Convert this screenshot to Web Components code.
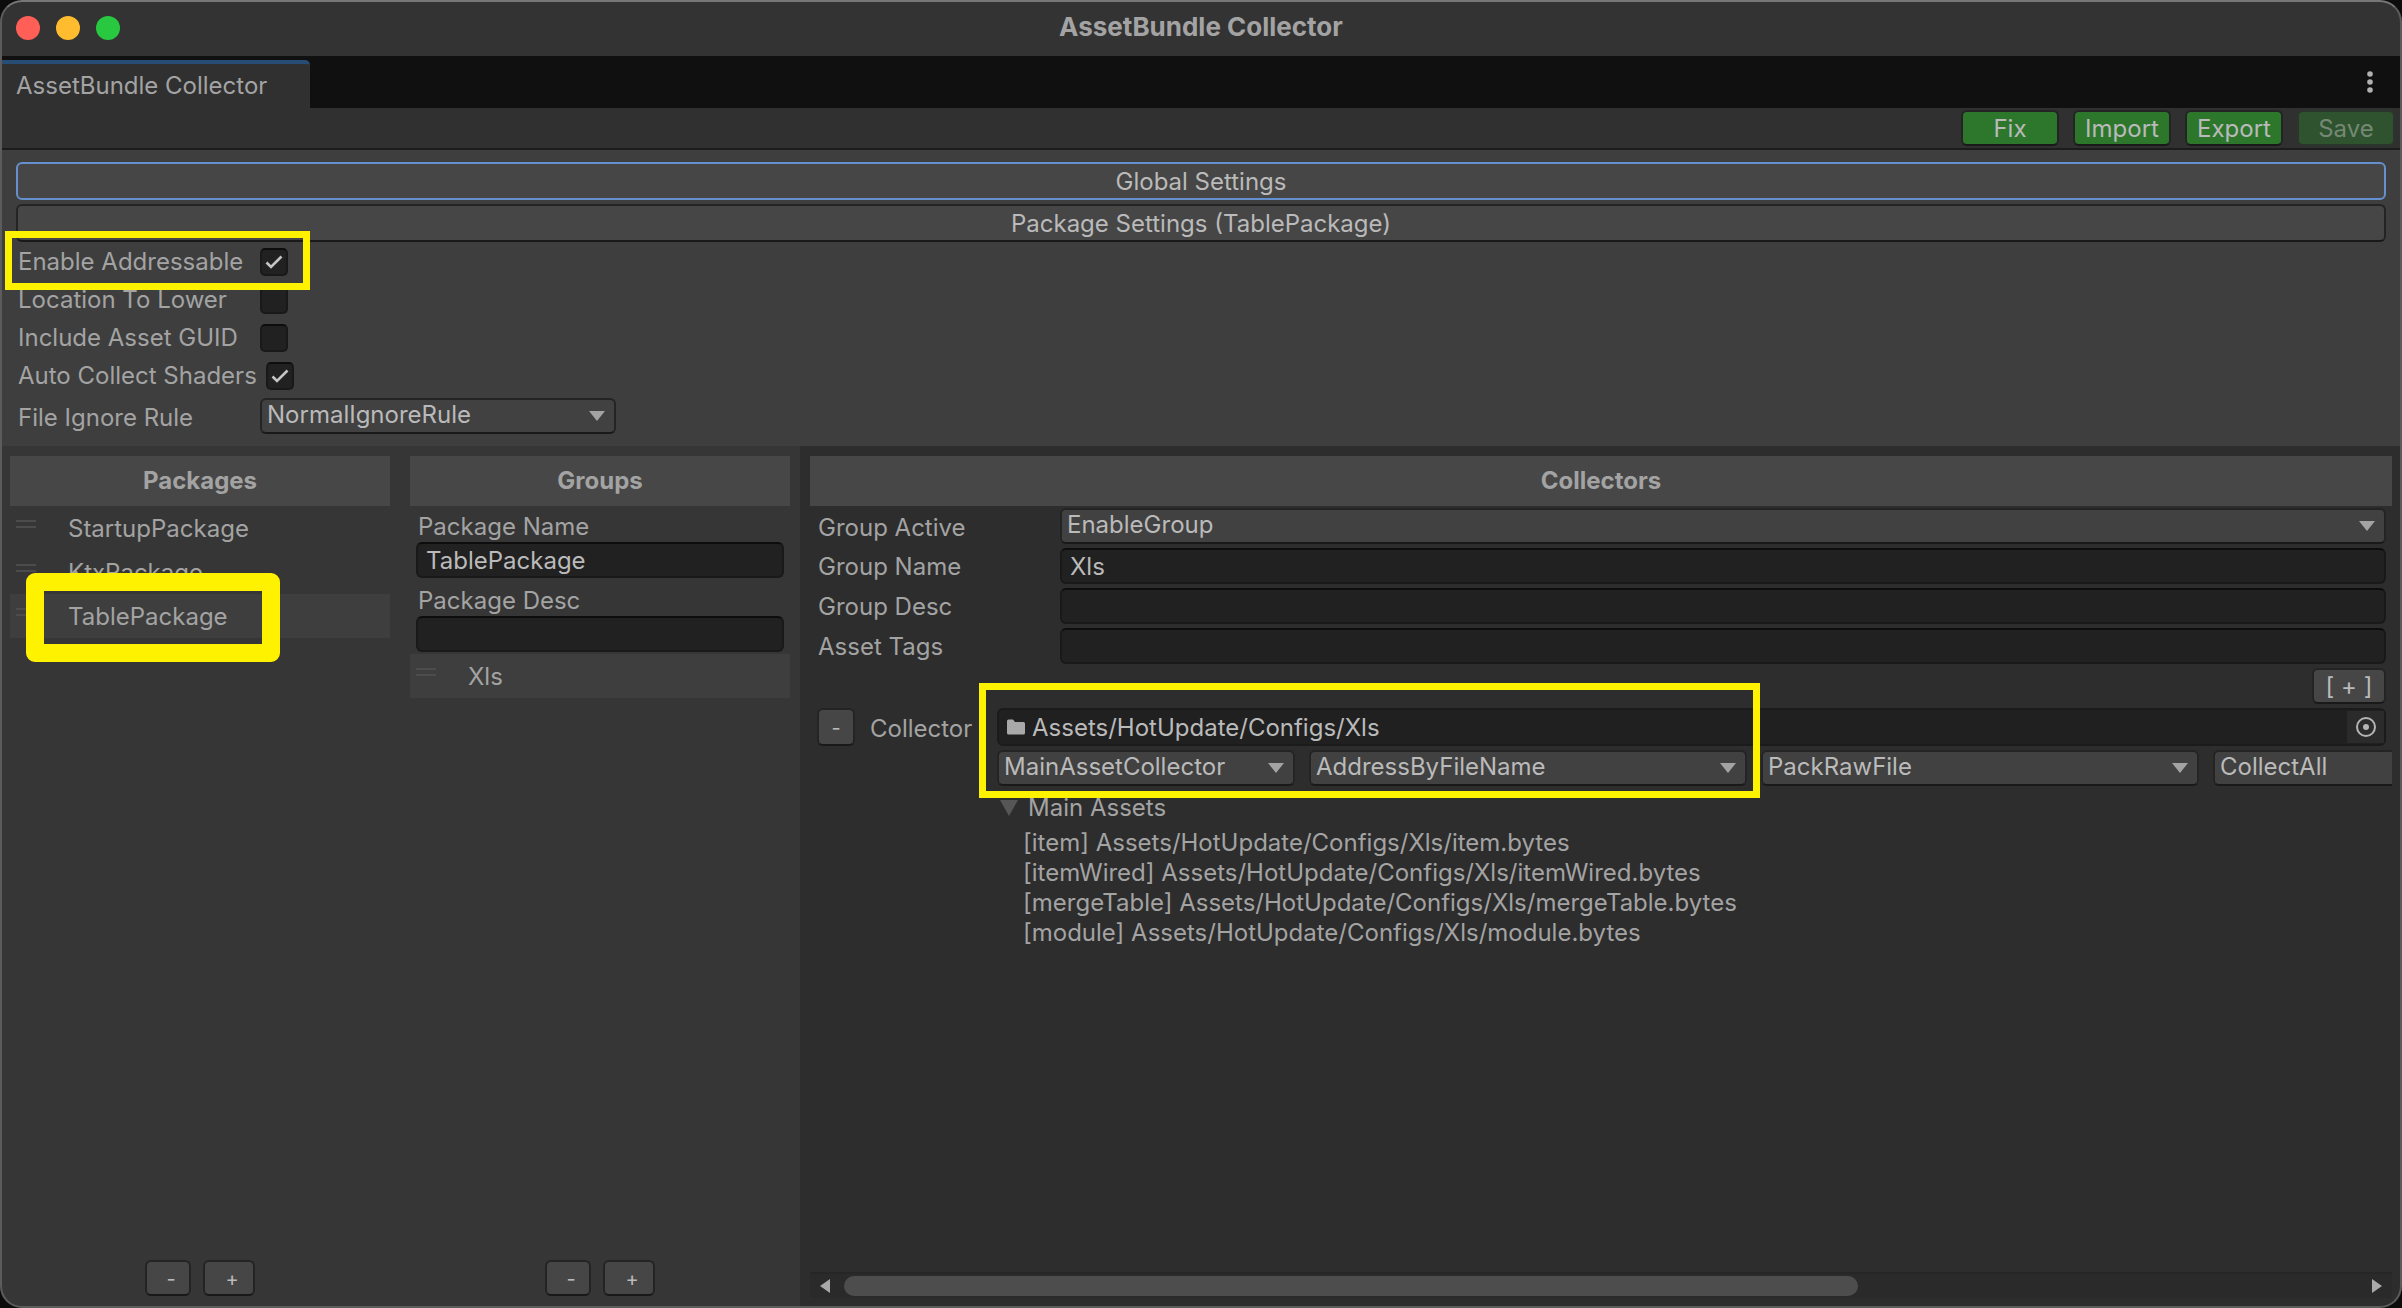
<!DOCTYPE html>
<html lang="en">
<head>
<meta charset="utf-8">
<title>AssetBundle Collector</title>
<style>
  html, body { margin: 0; height: 100%; background: #0c0c0c; }
  body {
    font: 24px/30px Inter, "Liberation Sans", sans-serif;
    color: #a3a3a3;
    --edge: #242424;
    --edge-dark: #191919;
    --face: #464646;
    --ink: #bababa;
  }
</style>
</head>
<body>
<bundle-window></bundle-window>

<script>
const define = (name, html, setup) => {
  const tpl = document.createElement('template');
  tpl.innerHTML = html;
  customElements.define(name, class extends HTMLElement {
    constructor() {
      super();
      this.attachShadow({ mode: 'open' }).append(tpl.content.cloneNode(true));
    }
    connectedCallback() { if (setup) setup(this, this.shadowRoot); }
  });
};

/* Push button: `tone` picks the colour, `focused` the blue ring */
define('tool-button', `
<style>
  :host { display: block; }
  button {
    box-sizing: border-box; display: block; width: 100%; height: 100%; min-height: 36px;
    margin: 0; padding: 2px 0 0; font: inherit; line-height: 30px; color: var(--ink);
    background: var(--face); border: 2px solid var(--edge); border-bottom-color: var(--edge-dark);
    border-radius: 6px;
  }
  :host([tone="green"]) button { background: #2d772d; }
  :host([tone="green"]) button:disabled { background: #2e532e; border-color: #2b352b; color: #758875; }
  :host([focused]) button { border-color: #6690cd; }
  :host([small]) button { font-size: 20px; }
  :host([shift]) button { padding-left: 6px; }
</style>
<button type="button"><slot></slot></button>`, (el, root) => {
  const b = root.querySelector('button');
  b.disabled = el.hasAttribute('disabled');
  if (el.title) b.setAttribute('aria-label', el.title);
});

/* Labelled tick box */
define('check-field', `
<style>
  :host { display: block; height: 38px; }
  label { display: flex; align-items: center; height: 31px; }
  span { min-width: 242px; }
  :host([tight]) span { min-width: 0; margin-right: 9px; }
  input {
    appearance: none; box-sizing: border-box; width: 28px; height: 28px; margin: 0; display: block;
    background: #212121; border: 2px solid var(--edge-dark); border-top-color: #0d0d0d; border-radius: 5px;
  }
  .box { position: relative; }
  svg { position: absolute; inset: 0; display: none; pointer-events: none; }
  input:checked + svg { display: block; }
</style>
<label><span><slot></slot></span><div class="box"><input type="checkbox"><svg width="28" height="28" viewBox="0 0 28 28"><path d="M6.500 14.500l4.500 4.500L21.500 8.500" fill="none" stroke="#c4c4c4" stroke-width="2.600"/></svg></div></label>`,
(el, root) => { root.querySelector('input').checked = el.hasAttribute('checked'); });

/* Drop-down, optionally with a label in front */
define('menu-field', `
<style>
  :host { display: block; }
  label { display: flex; align-items: center; }
  .text { flex: none; width: var(--label, 0px); overflow: hidden; padding-top: 4px; }
  .text, .box { display: block; }
  .box { position: relative; flex: 1; min-width: 0; }
  select {
    appearance: none; box-sizing: border-box; display: block; width: 100%; height: 36px; margin: 0;
    padding: 0 40px 2px 5px; font: inherit; line-height: 30px; color: var(--ink); background: #414141;
    border: 2px solid var(--edge); border-bottom-color: var(--edge-dark); border-radius: 6px;
  }
  svg { position: absolute; right: 11px; top: 13px; pointer-events: none; }
</style>
<label><span class="text"></span><span class="box"><select></select><svg width="16" height="10" viewBox="0 0 16 10"><path d="M0 0h16L8 10z" fill="#a3a3a3"/></svg></span></label>`,
(el, root) => {
  root.querySelector('.text').textContent = el.getAttribute('label') || '';
  const s = root.querySelector('select');
  s.replaceChildren(new Option(el.getAttribute('value')));
  if (!el.hasAttribute('label')) s.setAttribute('aria-label', el.getAttribute('name'));
});

/* Text box; `stacked` puts the label above it */
define('text-field', `
<style>
  :host { display: block; }
  label { display: flex; align-items: center; }
  span { flex: none; width: var(--label); padding-top: 2px; }
  input {
    box-sizing: border-box; flex: 1; min-width: 0; height: 36px; margin: 0; padding: 0 8px;
    font: inherit; color: var(--ink); background: #212121;
    border: 2px solid var(--edge-dark); border-top-color: #0d0d0d; border-radius: 6px;
  }
  :host([stacked]) label { flex-direction: column; align-items: stretch; }
  :host([stacked]) span { width: auto; height: 36px; padding: 0 0 0 2px; line-height: 42px; }
  :host([stacked]) input { flex: none; }
</style>
<label><span></span><input type="text"></label>`, (el, root) => {
  root.querySelector('span').textContent = el.getAttribute('label');
  root.querySelector('input').value = el.getAttribute('value') || '';
});

/* Reorderable list row */
define('list-row', `
<style>
  :host { display: flex; align-items: center; height: 44px; padding-left: 6px; box-sizing: border-box; line-height: 32px; }
  :host([selected]) { background: #3e3e3e; }
  i { width: 20px; height: 4px; margin: 0 32px 8px 0; border: solid #4c4c4c; border-width: 2px 0; }
  span { padding-top: 2px; }
</style>
<i></i><span><slot></slot></span>`);

/* Column with a header bar */
define('pane-column', `
<style>
  :host { display: flex; flex-direction: column; min-width: 0; padding: 10px; box-sizing: border-box; background: #363636; }
  :host([dark]) { background: #2d2d2d; }
  h2 { flex: none; margin: 0; font: inherit; font-weight: 700; line-height: 50px; text-align: center; background: #474747; }
  .body { flex: 1; min-height: 0; overflow: hidden; }
  footer { display: flex; }
</style>
<h2></h2><div class="body"><slot></slot></div><footer><slot name="foot"></slot></footer>`,
(el, root) => { root.querySelector('h2').textContent = el.getAttribute('heading'); });

/* Remove / add pair */
define('list-tools', `
<style>
  :host { display: flex; justify-content: center; gap: 12px; width: 100%; padding-bottom: 2px; }
  .remove { width: 46px; }
  .add { width: 52px; }
</style>
<tool-button class="remove" small shift title="Remove">-</tool-button><tool-button class="add" small shift title="Add">+</tool-button>`);

/* One collector: path field, rule menus and the assets found */
define('collector-item', `
<style>
  :host { display: grid; grid-template-columns: 38px 142px 1fr; padding-left: 7px; row-gap: 4px; }
  .minus { height: 38px; }
  .name { height: 38px; padding-left: 15px; line-height: 42px; }
  .path {
    display: flex; align-items: center; box-sizing: border-box; height: 38px; margin-right: 6px; padding-left: 8px;
    background: #202020; border: 2px solid #1b1b1b; border-radius: 6px;
  }
  .path input { flex: 1; min-width: 0; margin: 0; padding: 2px 0 0 7px; border: 0; background: none; font: inherit; color: var(--ink); }
  .path button { width: 37px; height: 32px; padding: 0; border: 0; background: #2b2b2b; display: grid; place-items: center; }
  .menus, .assets { grid-column: 3; }
  .menus { display: flex; gap: 14px; overflow: hidden; }
  .menus > * { flex: none; width: 438px; }
  .menus > :first-child { width: 298px; }
  summary { display: flex; align-items: center; gap: 10px; height: 36px; padding-left: 3px; list-style: none; }
  ul { list-style: none; margin: 0; padding: 2px 0 0 26px; }
</style>
<tool-button class="minus" small title="Remove collector">-</tool-button>
<label class="name" for="path">Collector</label>
<div class="path">
  <svg width="18" height="16" viewBox="0 0 18 16"><path d="M0 2a1.500 1.500 0 0 1 1.500-1.500H6L8 3h8.500A1.500 1.500 0 0 1 18 4.500V14a1.500 1.500 0 0 1-1.500 1.500h-15A1.500 1.500 0 0 1 0 14z" fill="#a9a9a9"/></svg>
  <input id="path" type="text" value="Assets/HotUpdate/Configs/Xls">
  <button type="button" aria-label="Pick folder"><svg width="22" height="22" viewBox="0 0 22 22"><circle cx="11" cy="11" r="9" fill="none" stroke="#b4b4b4" stroke-width="2"/><circle cx="11" cy="11" r="3" fill="#b4b4b4"/></svg></button>
</div>
<div class="menus">
  <menu-field name="Collector type" value="MainAssetCollector"></menu-field>
  <menu-field name="Address rule" value="AddressByFileName"></menu-field>
  <menu-field name="Pack rule" value="PackRawFile"></menu-field>
  <menu-field name="Filter rule" value="CollectAll"></menu-field>
</div>
<details class="assets" open>
  <summary><svg width="18" height="16" viewBox="0 0 18 16"><path d="M0 0h18L9 16z" fill="#565656"/></svg>Main Assets</summary>
  <ul>
    <li>[item] Assets/HotUpdate/Configs/Xls/item.bytes</li>
    <li>[itemWired] Assets/HotUpdate/Configs/Xls/itemWired.bytes</li>
    <li>[mergeTable] Assets/HotUpdate/Configs/Xls/mergeTable.bytes</li>
    <li>[module] Assets/HotUpdate/Configs/Xls/module.bytes</li>
  </ul>
</details>`);

/* Horizontal scroller */
define('scroll-strip', `
<style>
  :host { display: flex; align-items: center; box-sizing: border-box; width: 100%; height: 26px; padding: 0 10px; gap: 14px; background: #2a2a2a; border-top: 2px solid #262626; }
  .track { flex: 1; }
  .thumb { width: 67%; height: 20px; border-radius: 10px; background: #4d4d4d; }
</style>
<svg width="10" height="14" viewBox="0 0 10 14"><path d="M10 0v14L0 7z" fill="#a9a9a9"/></svg>
<div class="track"><div class="thumb"></div></div>
<svg width="10" height="14" viewBox="0 0 10 14"><path d="M0 0v14l10-7z" fill="#a9a9a9"/></svg>`);

/* Yellow call-out frame laid over the window */
define('callout-frame', `
<style>
  :host { position: absolute; box-sizing: border-box; border: 7px solid #fff200; pointer-events: none; }
  :host([bold]) { border-width: 18px; border-radius: 9px; }
</style>`);

define('bundle-window', `
<style>
  :host { display: flex; flex-direction: column; position: relative; box-sizing: border-box; min-height: 100vh; background: #3e3e3e; border-radius: 22px; overflow: hidden; }
  .rim { position: absolute; inset: 0; box-sizing: border-box; border: 2px solid #5c5c5c; border-top-color: #777; border-radius: 22px; pointer-events: none; }
  header { display: grid; grid-template-columns: 1fr auto 1fr; align-items: center; height: 56px; background: #333; }
  .lights { display: flex; gap: 16px; padding-left: 16px; }
  .lights i { width: 24px; height: 24px; border-radius: 50%; background: #ff5f57; }
  .lights i:nth-child(2) { background: #febc2e; }
  .lights i:nth-child(3) { background: #28c840; }
  h1 { margin: 0; font: inherit; font-size: 26px; font-weight: 700; height: 32px; }
  nav { display: flex; justify-content: space-between; align-items: flex-end; height: 52px; background: #101010; }
  .tab { box-sizing: border-box; width: 310px; height: 48px; padding-left: 16px; line-height: 43px; background: #303030; border-top: 4px solid #274d75; border-top-right-radius: 5px; }
  .more { width: 30px; height: 52px; margin-right: 17px; padding: 0; border: 0; background: none; }
  .more svg { display: block; margin: auto; }
  .tools { display: flex; justify-content: flex-end; gap: 14px; height: 36px; padding: 2px 7px 2px; background: #303030; border-bottom: 2px solid #1c1c1c; }
  .tools > * { width: 98px; }
  .settings { height: 284px; padding: 12px 16px 0; }
  .fold { height: 38px; margin-bottom: 4px; }
  .opts { padding: 0 0 0 2px; }
  .rule { --label: 242px; width: 598px; }
  main { flex: 1; display: grid; grid-template-columns: 400px 400px 1fr; background: #2d2d2d; }
  .form { display: flex; flex-direction: column; gap: 2px; padding: 0 6px 2px; }
  .group { --label: 242px; display: flex; flex-direction: column; gap: 4px; padding: 2px 6px 4px 8px; }
  .add { display: flex; justify-content: flex-end; padding: 0 6px 4px 0; }
  .add > * { width: 74px; }
  .one { left: 5px; top: 231px; width: 305px; height: 59px; }
  .two { left: 26px; top: 573px; width: 254px; height: 89px; }
  .three { left: 979px; top: 683px; width: 781px; height: 115px; }
</style>
<header>
  <div class="lights"><i></i><i></i><i></i></div>
  <h1>AssetBundle Collector</h1>
</header>
<nav>
  <div class="tab">AssetBundle Collector</div>
  <button class="more" type="button" aria-label="More"><svg width="6" height="22" viewBox="0 0 6 22" fill="#b0b0b0"><circle cx="3" cy="3" r="2.800"/><circle cx="3" cy="11" r="2.800"/><circle cx="3" cy="19" r="2.800"/></svg></button>
</nav>
<div class="tools">
  <tool-button tone="green">Fix</tool-button>
  <tool-button tone="green">Import</tool-button>
  <tool-button tone="green">Export</tool-button>
  <tool-button tone="green" disabled>Save</tool-button>
</div>
<section class="settings">
  <tool-button class="fold" focused>Global Settings</tool-button>
  <tool-button class="fold">Package Settings (TablePackage)</tool-button>
  <div class="opts">
    <check-field checked>Enable Addressable</check-field>
    <check-field>Location To Lower</check-field>
    <check-field>Include Asset GUID</check-field>
    <check-field checked tight>Auto Collect Shaders</check-field>
    <menu-field class="rule" label="File Ignore Rule" value="NormalIgnoreRule"></menu-field>
  </div>
</section>
<main>
  <pane-column heading="Packages">
    <list-row>StartupPackage</list-row>
    <list-row>KtxPackage</list-row>
    <list-row selected>TablePackage</list-row>
    <list-tools slot="foot"></list-tools>
  </pane-column>
  <pane-column heading="Groups">
    <div class="form">
      <text-field stacked label="Package Name" value="TablePackage"></text-field>
      <text-field stacked label="Package Desc"></text-field>
    </div>
    <list-row selected>Xls</list-row>
    <list-tools slot="foot"></list-tools>
  </pane-column>
  <pane-column dark heading="Collectors">
    <div class="group">
      <menu-field label="Group Active" value="EnableGroup"></menu-field>
      <text-field label="Group Name" value="Xls"></text-field>
      <text-field label="Group Desc"></text-field>
      <text-field label="Asset Tags"></text-field>
    </div>
    <div class="add"><tool-button title="Add collector">[ + ]</tool-button></div>
    <collector-item></collector-item>
    <scroll-strip slot="foot"></scroll-strip>
  </pane-column>
</main>
<callout-frame class="one"></callout-frame>
<callout-frame class="two" bold></callout-frame>
<callout-frame class="three"></callout-frame>
<div class="rim"></div>`);
</script>
</body>
</html>
